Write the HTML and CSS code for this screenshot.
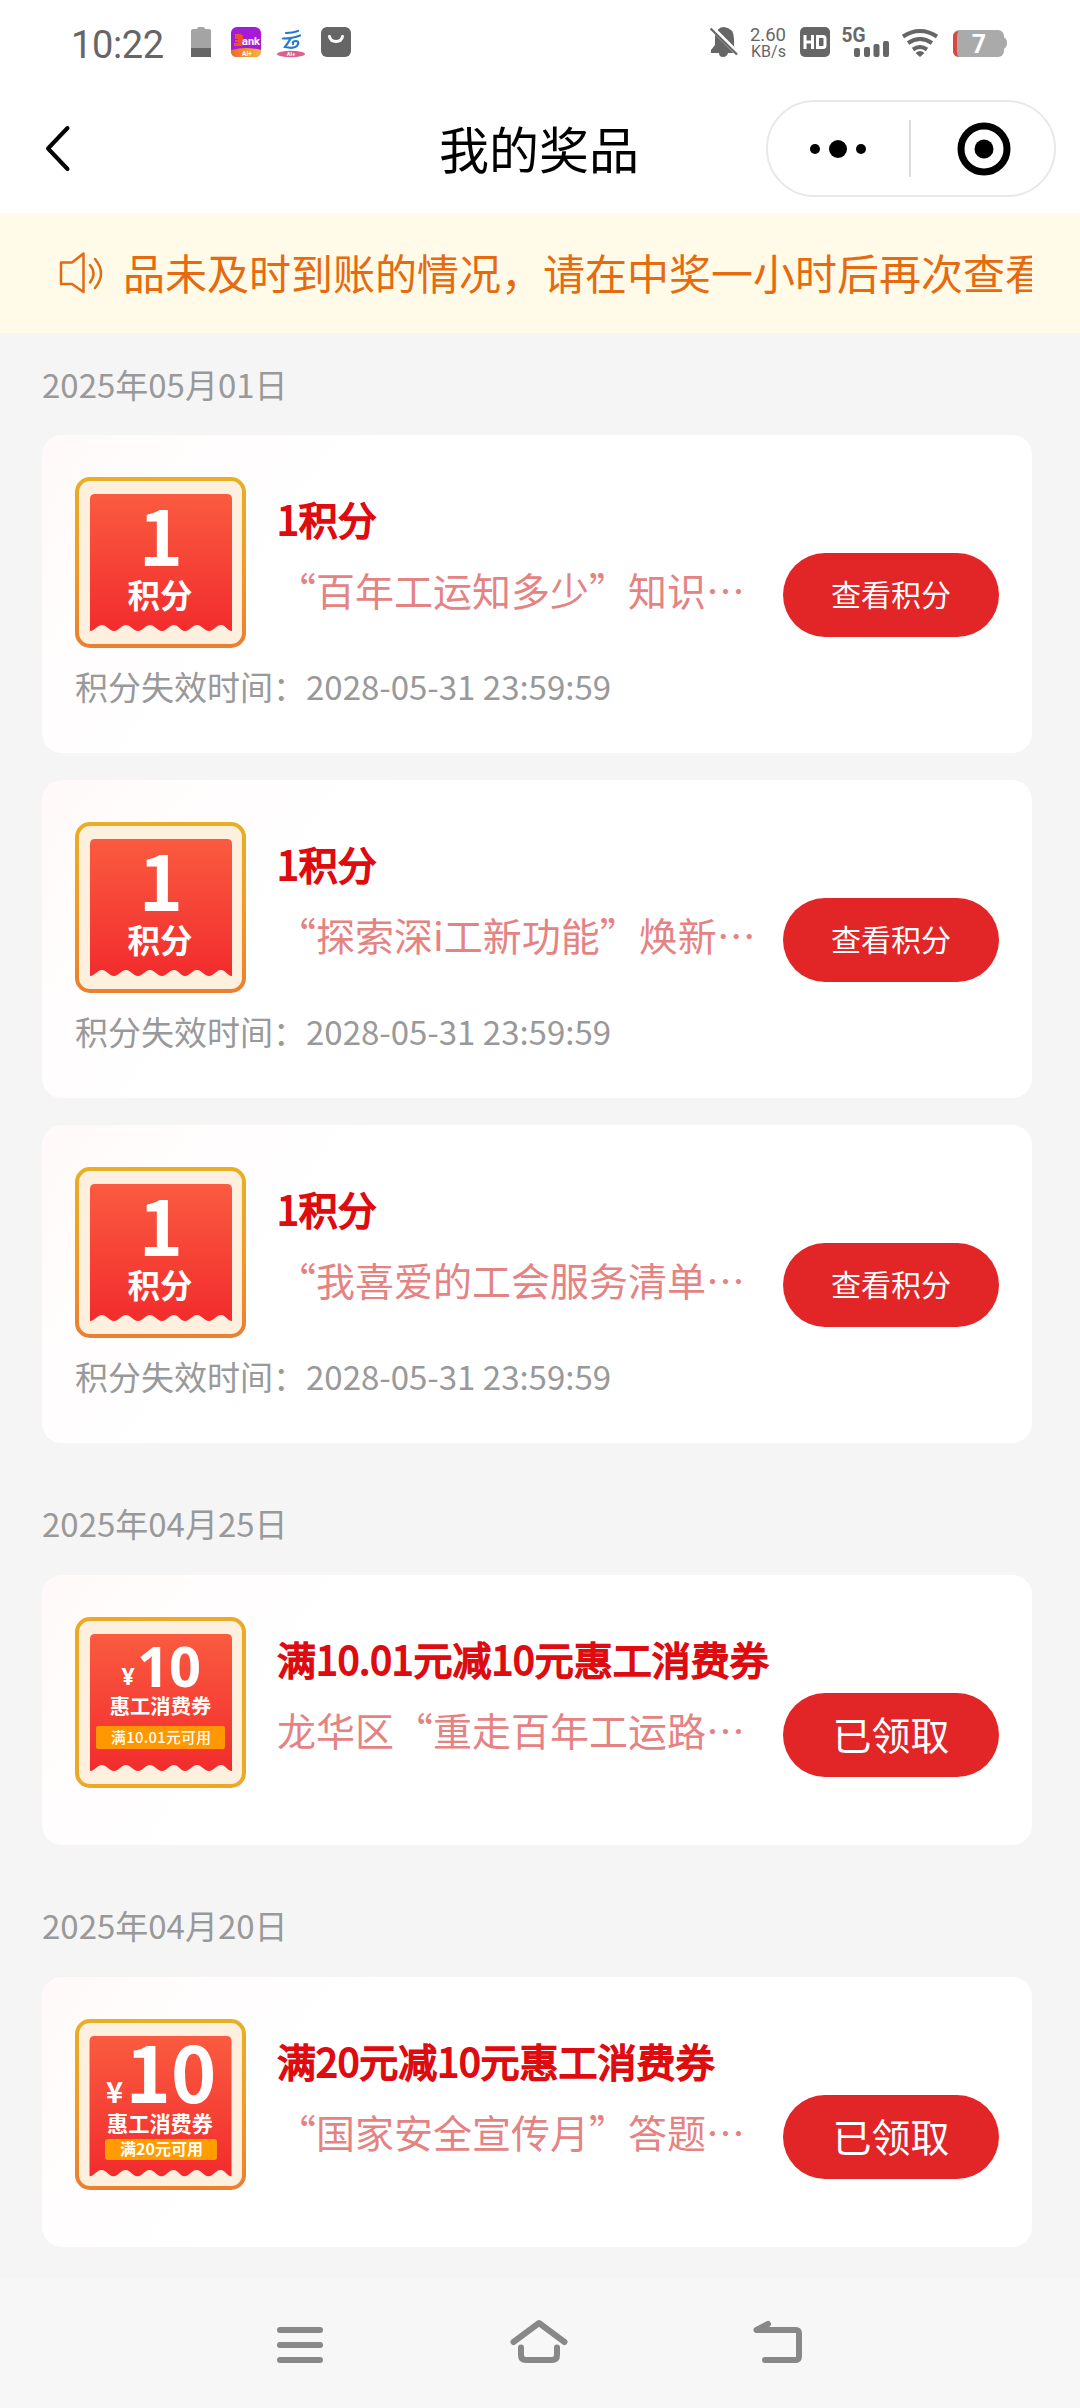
FILE: index.html
```html
<!DOCTYPE html>
<html lang="zh-CN">
<head>
<meta charset="utf-8">
<title>我的奖品</title>
<link rel="stylesheet" href="styles.css">
</head>
<body>
<svg class="defs" width="0" height="0" aria-hidden="true">
  <defs>
    <linearGradient id="red" x1="0" y1="0" x2="0" y2="1"><stop offset="0" stop-color="#fa5b40"/><stop offset="1" stop-color="#f22c2d"/></linearGradient>
    <linearGradient id="rim" x1="0" y1="0" x2="0" y2="1"><stop offset="0" stop-color="#e8af24"/><stop offset=".5" stop-color="#f39a22"/><stop offset="1" stop-color="#ea8030"/></linearGradient>
    <linearGradient id="bank" x1="0" y1="0" x2="1" y2="1"><stop offset="0" stop-color="#9a20d8"/><stop offset="1" stop-color="#b512d6"/></linearGradient>
    <linearGradient id="bankfoot" x1="0" y1="0" x2="1" y2="0"><stop offset="0" stop-color="#ee6a2c"/><stop offset="1" stop-color="#f5b83c"/></linearGradient>
    <symbol id="ticket" viewBox="0 0 171 171">
      <path fill="url(#red)" d="M15 22q0-5 5-5h132q5 0 5 5v132c-5 0-6-6-11-6s-7 6-12 6-7-6-12-6-7 6-12 6-6-6-11-6-7 6-12 6-7-6-12-6-7 6-12 6-7-6-12-6-7 6-12 6-7-6-12-6-7 6-12 6z"/>
    </symbol>
    <symbol id="points" viewBox="0 0 171 171">
      <rect x="2" y="2" width="167" height="167" rx="13" fill="#fef0df" stroke="url(#rim)" stroke-width="4"/>
      <use href="#ticket"/>
      <text class="t-bold" x="86" y="89" font-size="75">1</text>
      <text class="t-bold" x="85" y="131" font-size="32.500">积分</text>
    </symbol>
  </defs>
</svg>

<header class="status">
  <span class="clock">10:22</span>
  <svg class="s-apps" width="162" height="32" viewBox="190 26 162 32">
    <path fill="#a4a4a4" d="M191 31q0-2 2-2h4q0-2 2-2h4q2 0 2 2h4q2 0 2 2v17h-20z"/><path fill="#666" d="M191 48h20v9h-20z"/>
    <rect x="231" y="27" width="30" height="30" rx="6" fill="url(#bank)"/>
    <path fill="url(#bankfoot)" d="M231 50q15-4 30 0v1q0 6-6 6h-18q-6 0-6-6z"/>
    <path fill="#f0502a" d="M235 34h6l2 2v3l-1 1 2 2v3l-2 1h-8v-3h4v-1h-3v-2h3v-1h-3z"/>
    <text class="t-ui" x="251" y="45" font-size="11" font-weight="700" fill="#fff">ank</text>
    <text class="t-ui" x="247" y="55.500" font-size="6.500" font-weight="700" fill="#fff">AI+</text>
    <path fill="none" stroke="#2778cf" stroke-width="2.200" stroke-linecap="round" d="M286 33q7 0 12-2M283 38.500q10 0 17-3M291 38q-3 5-6 9 9 2 12-1 3-5-1-5-4 0-3 3"/>
    <ellipse cx="291" cy="54" rx="14" ry="3.200" fill="#dc608c"/>
    <text class="t-ui" x="291" y="56" font-size="5.500" font-weight="700" fill="#fff">AI+</text>
    <rect x="321" y="27" width="30" height="30" rx="6" fill="#666"/>
    <path fill="none" stroke="#fff" stroke-width="3" stroke-linecap="round" d="M329.500 36.500q1 5 6.500 5t6.500-5"/>
  </svg>
  <svg class="s-signals" width="298" height="32" viewBox="711 26 298 32">
    <path fill="#666" d="M716 36q2-9 9-9 10 1 10 12v7l3 5v2h-9q-1 4-5 4t-4-4h-8v-3l4-5z"/>
    <path stroke="#fff" stroke-width="5" d="M714 29l26 26"/><path stroke="#666" stroke-width="2.300" d="M711.500 28.500l26.500 26"/>
    <text class="t-ui" x="769" y="41" font-size="18.500" fill="#666" textLength="36">2.60</text>
    <text class="t-ui" x="769.500" y="56.500" font-size="16" fill="#666" textLength="35">KB/s</text>
    <rect x="801" y="27" width="30" height="30" rx="5" fill="#666"/>
    <path fill="none" stroke="#fff" stroke-width="3" d="M806 35v14M813.500 35v14M806 42h7.500M818.500 36.500h5.500q2 0 2 2v7q0 2-2 2h-5.500z"/>
    <text class="t-ui" x="854.500" y="42" font-size="20" font-weight="700" fill="#666" textLength="24" lengthAdjust="spacingAndGlyphs">5G</text>
    <g fill="#666"><rect x="855" y="48" width="6" height="9" rx="2"/><rect x="865" y="47" width="6" height="10" rx="2"/><rect x="874.500" y="44" width="6" height="13" rx="2"/><rect x="884" y="41" width="6" height="16" rx="2"/></g>
    <g fill="none" stroke="#666" stroke-width="4"><path d="M904 36.500q17-11 34 0"/><path d="M909 43q12-8 24 0"/><path d="M914 49.500q7-5 14 0"/></g><path fill="#666" d="M916.500 53q4.500-4 9 0l-4.500 4z"/>
    <rect x="954" y="30" width="51" height="27" rx="6" fill="#aaa"/><path fill="#aaa" d="M1004 37q4 1 4 6t-4 6z"/><path fill="#db4640" d="M959.500 31q-5.500 1-5.500 6v14q0 5 5.500 6-1.500-2-1.500-6V37q0-4 1.500-6z"/>
    <text class="t-ui" x="980" y="53" font-size="25" font-weight="700" fill="#fff">7</text>
  </svg>
</header>

<nav class="titlebar">
  <svg class="back" width="30" height="50" viewBox="44 124 30 50"><path fill="none" stroke="#000" stroke-width="4" stroke-linecap="round" stroke-linejoin="round" d="M67.500 128L48 148.500l19.500 20.500"/></svg>
  <h1>我的奖品</h1>
  <div class="capsule">
    <svg width="58" height="22" viewBox="0 0 58 22"><circle cx="6" cy="11" r="5"/><circle cx="29" cy="11" r="9"/><circle cx="52" cy="11" r="5"/></svg>
    <i class="divider"></i>
    <svg width="54" height="54" viewBox="0 0 54 54"><circle cx="27" cy="27" r="23" fill="none" stroke="#000" stroke-width="7"/><circle cx="27" cy="27" r="9.500"/></svg>
  </div>
</nav>

<section class="notice">
  <svg width="48" height="48" viewBox="58 249 48 48" fill="none" stroke="#e26b14" stroke-width="2.500" stroke-linejoin="round" stroke-linecap="round"><path d="M61 262.500h11l11.500-9v38.500L72 284H61z"/><path d="M90 265q7 8.500 0 17.500M95 259q12 14.500 0 29"/></svg>
  <div class="marquee">品未及时到账的情况，请在中奖一小时后再次查看</div>
</section>

<main>
  <h2 class="date">2025年05月01日</h2>
  <article class="card">
    <div class="prize">
      <svg class="thumb" viewBox="0 0 171 171"><use href="#points"/></svg>
      <div class="info"><h3>1积分</h3><p>“百年工运知多少”知识…</p></div>
      <button class="btn">查看积分</button>
    </div>
    <div class="expiry">积分失效时间：2028-05-31 23:59:59</div>
  </article>
  <article class="card">
    <div class="prize">
      <svg class="thumb" viewBox="0 0 171 171"><use href="#points"/></svg>
      <div class="info"><h3>1积分</h3><p>“探索深i工新功能”焕新…</p></div>
      <button class="btn">查看积分</button>
    </div>
    <div class="expiry">积分失效时间：2028-05-31 23:59:59</div>
  </article>
  <article class="card">
    <div class="prize">
      <svg class="thumb" viewBox="0 0 171 171"><use href="#points"/></svg>
      <div class="info"><h3>1积分</h3><p>“我喜爱的工会服务清单…</p></div>
      <button class="btn">查看积分</button>
    </div>
    <div class="expiry">积分失效时间：2028-05-31 23:59:59</div>
  </article>

  <h2 class="date later">2025年04月25日</h2>
  <article class="card">
    <div class="prize">
      <svg class="thumb" viewBox="0 0 171 171">
        <rect x="2" y="2" width="167" height="167" rx="13" fill="#fef0df" stroke="#eda825" stroke-width="4"/>
        <use href="#ticket"/>
        <text class="t-round" x="53" y="68" font-size="23">¥</text>
        <text class="t-round" x="94" y="70" font-size="56">10</text>
        <text class="t-bold" x="85.500" y="96.500" font-size="20.300">惠工消费券</text>
        <rect x="21" y="109" width="129" height="23" rx="2" fill="#ff9700"/>
        <text class="t-medium" x="86" y="126" font-size="14.800" textLength="100">满10.01元可用</text>
      </svg>
      <div class="info"><h3>满10.01元减10元惠工消费券</h3><p>龙华区“重走百年工运路…</p></div>
      <button class="btn large">已领取</button>
    </div>
  </article>

  <h2 class="date last">2025年04月20日</h2>
  <article class="card">
    <div class="prize">
      <svg class="thumb" viewBox="0 0 171 171">
        <rect x="2" y="2" width="167" height="167" rx="13" fill="#fef0df" stroke="url(#rim)" stroke-width="4"/>
        <svg x="-.5" y="-.4" width="171" height="175" viewBox="0 0 171 171" preserveAspectRatio="none"><use href="#ticket"/></svg>
        <text class="t-bold" x="39.500" y="84" font-size="29">¥</text>
        <text class="t-bold" x="96" y="84" font-size="77">10</text>
        <text class="t-bold" x="85" y="113" font-size="21.200">惠工消费券</text>
        <rect x="30" y="120" width="112" height="21" rx="3" fill="#ff9d00"/>
        <text class="t-bold" x="86.500" y="136" font-size="16">满20元可用</text>
      </svg>
      <div class="info"><h3>满20元减10元惠工消费券</h3><p>“国家安全宣传月”答题…</p></div>
      <button class="btn large">已领取</button>
    </div>
  </article>
</main>

<footer class="sysnav">
  <svg width="50" height="50" viewBox="0 0 50 50"><path d="M5 12h40M5 27h40M5 42h40"/></svg>
  <svg width="60" height="50" viewBox="0 0 60 50"><path d="M4.500 24L30 5l25.500 19"/><path d="M12 29.500V37q0 5 5 5h26q5 0 5-5v-7.500" stroke-width="5.500"/></svg>
  <svg width="52" height="50" viewBox="0 0 52 50"><path d="M15 6L3.500 12H43q3 0 3 4v22q0 4-3 4H12"/></svg>
</footer>
</body>
</html>
```
FILE: styles.css
```css
* { box-sizing: border-box; margin: 0; padding: 0; }

body {
  width: 1080px;
  height: 2408px;
  display: flex;
  flex-direction: column;
  overflow: hidden;
  background: #f5f5f5;
  font-family: "Noto Sans CJK SC", sans-serif;
  text-spacing-trim: space-all;
}

svg { display: block; flex: none; }
.defs { position: absolute; }
text { text-anchor: middle; }
.t-bold { font-family: "Noto Sans CJK SC", sans-serif; font-weight: 700; fill: #fff; }
.t-medium { font-family: "Noto Sans CJK SC", sans-serif; font-weight: 500; fill: #fff; }
.t-round { font-family: "Open Sans", sans-serif; font-weight: 700; fill: #fff; }
.t-ui { font-family: Roboto, sans-serif; }

.status {
  height: 84px;
  padding: 0 72px 0 71px;
  display: flex;
  align-items: center;
  background: #fff;
}
.clock {
  width: 119px;
  font: 400 38px/46px Roboto, sans-serif;
  letter-spacing: -.4px;
  color: #666;
  padding-top: 5px;
}
.s-signals { margin-left: auto; }

.titlebar {
  height: 129px;
  padding: 0 24px 0 44px;
  display: grid;
  grid-template-columns: 290px 1fr 290px;
  align-items: center;
  background: #fff;
}
.titlebar h1 {
  font-size: 50px;
  line-height: 72px;
  font-weight: 400;
  text-align: center;
  padding: 0 22px 3px 0;
  color: #000;
}
.capsule {
  height: 97px;
  border: 2px solid #e8e8e8;
  border-radius: 49px;
  display: flex;
  align-items: center;
  padding: 0 41px;
}
.divider { width: 2px; height: 57px; background: #ddd; margin: 0 46px 0 42px; }

.notice {
  height: 120px;
  padding: 0 48px 0 58px;
  display: flex;
  align-items: center;
  gap: 17px;
  background: #fffbe8;
}
.marquee {
  flex: 1;
  overflow: hidden;
  white-space: nowrap;
  font-size: 42px;
  line-height: 72px;
  padding-bottom: 3px;
  color: #e56a10;
}

main {
  flex: 1;
  padding: 0 48px 0 42px;
  display: flex;
  flex-direction: column;
}
.date {
  height: 102px;
  font-size: 33px;
  line-height: 102px;
  font-weight: 400;
  color: #999;
}
.date.later, .date.last { height: 105px; line-height: 107px; margin-top: 27px; }
.card {
  padding: 42px 33px 40px;
  border-radius: 20px;
  background: linear-gradient(125deg, #fff9f9 0, #fffdfd 14%, #fff 30%);
}
.card + .card { margin-top: 27px; }
.prize { display: flex; height: 171px; margin-bottom: 14px; }
.thumb { width: 171px; height: 171px; margin-right: 31px; }
.info { flex: 1; min-width: 0; white-space: nowrap; padding-top: 12px; }
.info h3 {
  font-size: 39px;
  line-height: 58px;
  font-weight: 400;
  color: #de0b10;
  -webkit-text-stroke: 1.8px #de0b10;
}
.info p { font-size: 39px; line-height: 58px; margin-top: 13px; color: #e58383; }
.btn {
  width: 216px;
  height: 84px;
  flex: none;
  align-self: flex-end;
  margin-bottom: 11px;
  padding-bottom: 5px;
  border: 0;
  border-radius: 42px;
  background: #e22526;
  color: #fff;
  font: 400 30px/78px "Noto Sans CJK SC", sans-serif;
}
.btn.large { font-size: 39px; }
.expiry { font-size: 33px; line-height: 48px; padding-bottom: 3px; color: #999; }
.prize:last-child { margin-bottom: 17px; }

.sysnav {
  height: 129px;
  padding: 0 275px 2px 275px;
  display: flex;
  justify-content: space-between;
  align-items: center;
  background: #f7f7f7;
}
.sysnav path { fill: none; stroke: #888; stroke-width: 6; stroke-linecap: round; stroke-linejoin: round; }
```
